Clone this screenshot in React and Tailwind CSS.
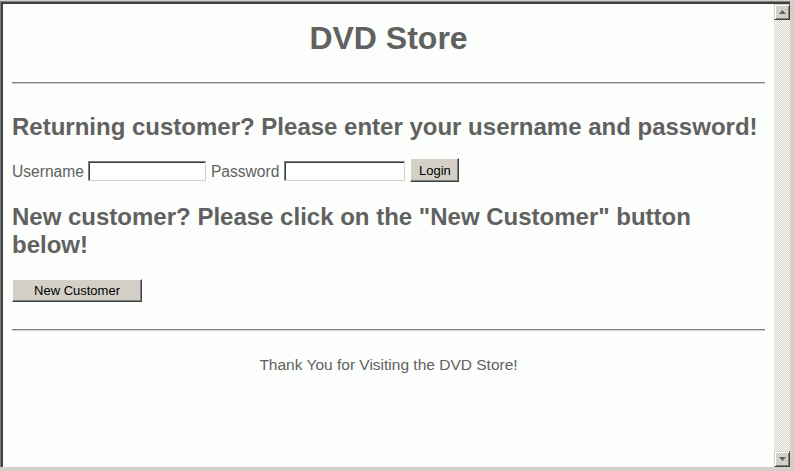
import React from 'react';

function ScrollButton({ down }) {
    return (
        <div className="w-[16px] h-[16px] bg-[#d4d0c8] border border-t-[#d4d0c8] border-l-[#d4d0c8] border-b-[#404040] border-r-[#404040] shadow-[inset_1px_1px_0_#ffffff,inset_-1px_-1px_0_#808080] flex items-center justify-center">
            <svg width="7" height="4" viewBox="0 0 7 4">
                {down ? <path d="M0 0h7L3.5 4z" fill="#606060" /> : <path d="M0 4h7L3.5 0z" fill="#606060" />}
            </svg>
        </div>
    );
}

function Btn({ children, className }) {
    return (
        <button className={"bg-[#d4d0c8] text-black text-[13px] leading-none border border-t-white border-l-white border-b-[#404040] border-r-[#404040] shadow-[inset_-1px_-1px_0_#808080] " + className}>
            {children}
        </button>
    );
}

function Field({ type, className }) {
    return (
        <input
            type={type}
            className={"mt-[3px] h-[20px] bg-white border border-t-[#808080] border-l-[#808080] border-b-[#d4d0c8] border-r-[#d4d0c8] shadow-[inset_1px_1px_0_#404040] outline-none " + className}
        />
    );
}

function Rule() {
    return <div className="h-[2px] border-t border-t-[#808080] border-b border-b-[#d0d0d0]" />;
}

export default function App() {
    return (
        <div className="w-[794px] h-[471px] bg-[#d4d0c8] pt-px pr-[4px] pb-[4px] flex flex-col font-['Liberation_Sans',Arial,sans-serif]">
            <div className="flex-1 flex flex-col border-t border-l border-[#808080]">
                <div className="flex-1 flex border-t-2 border-l-2 border-[#404040] min-h-0">
                    {/* page */}
                    <div className="flex-1 bg-[#fcfefc] px-[9px] text-[#616161]">
                        <h1 className="mt-[16px] text-[32px] leading-[37px] font-bold text-center">DVD Store</h1>
                        <div className="mt-[25px]"><Rule /></div>

                        <h2 className="mt-[29px] text-[24px] leading-[28px] font-bold">
                            Returning customer? Please enter your username and password!
                        </h2>
                        <div className="mt-[17px] flex items-start text-[15.6px] leading-[18px]">
                            <span className="mt-[5px] mr-[4px]">Username</span>
                            <Field type="text" className="w-[118px]" />
                            <span className="mt-[5px] ml-[5px] mr-[5px]">Password</span>
                            <Field type="password" className="w-[121px]" />
                            <Btn className="ml-[5px] w-[49px] h-[24px]">Login</Btn>
                        </div>

                        <h2 className="mt-[21px] text-[24px] leading-[28px] font-bold pr-[4px]">
                            New customer? Please click on the "New Customer" button below!
                        </h2>
                        <Btn className="mt-[20px] w-[130px] h-[23px] block">New Customer</Btn>

                        <div className="mt-[27px]"><Rule /></div>
                        <p className="mt-[25px] text-[15.5px] leading-[18px] text-center">
                            Thank You for Visiting the DVD Store!
                        </p>
                    </div>
                    {/* scrollbar */}
                    <div className="w-[16px] flex flex-col">
                        <ScrollButton />
                        <div className="flex-1 bg-[repeating-conic-gradient(#d4d0c8_0_25%,#ffffff_0_50%)] bg-[length:2px_2px]" />
                        <ScrollButton down />
                    </div>
                </div>
            </div>
        </div>
    );
}
